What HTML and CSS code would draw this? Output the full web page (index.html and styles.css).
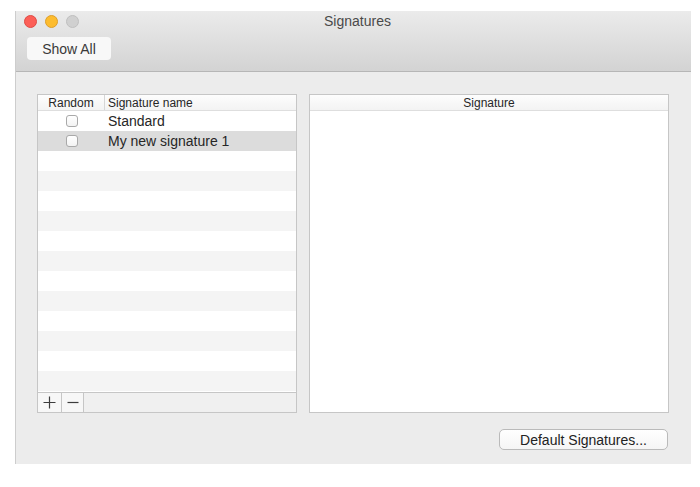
FILE: index.html
```html
<!DOCTYPE html>
<html lang="en">
<head>
  <meta charset="UTF-8">
  <title>Signatures</title>
  <link rel="stylesheet" href="styles.css">
</head>
<body>
  <div class="window">
    <div class="titlebar">
      <div class="title-row">
        <div class="lights">
          <span class="light red"></span>
          <span class="light yellow"></span>
          <span class="light off"></span>
        </div>
        <div class="title">Signatures</div>
        <div></div>
      </div>
      <button class="show-all">Show All</button>
    </div>

    <div class="content">
      <div class="panels">
        <div class="list">
          <div class="list-head">
            <div class="col-random">Random</div>
            <div class="col-name">Signature name</div>
          </div>
          <div class="list-body">
            <div class="row"><div class="cell-check"><span class="check"></span></div><div class="cell-name">Standard</div></div>
            <div class="row selected"><div class="cell-check"><span class="check"></span></div><div class="cell-name">My new signature 1</div></div>
            <div class="row"></div>
            <div class="row"></div>
            <div class="row"></div>
            <div class="row"></div>
            <div class="row"></div>
            <div class="row"></div>
            <div class="row"></div>
            <div class="row"></div>
            <div class="row"></div>
            <div class="row"></div>
            <div class="row"></div>
            <div class="row"></div>
            <div class="row"></div>
          </div>
          <div class="list-foot">
            <button class="tool plus" title="Add">
              <svg width="13" height="13" viewBox="0 0 13 13"><path d="M6.5 0.5v12M0.5 6.5h12" stroke="#3c3c3c" stroke-width="1.2" fill="none"/></svg>
            </button>
            <button class="tool minus" title="Remove">
              <svg width="12" height="13" viewBox="0 0 12 13"><path d="M0.5 6.5h11" stroke="#3c3c3c" stroke-width="1.2" fill="none"/></svg>
            </button>
          </div>
        </div>

        <div class="editor">
          <div class="editor-head">Signature</div>
          <div class="editor-body"></div>
        </div>
      </div>

      <div class="actions">
        <button class="default-btn">Default Signatures...</button>
      </div>
    </div>
  </div>
</body>
</html>
```

FILE: styles.css
```css
body {
  margin: 0;
  background-color: #fff;
  font-family: "Liberation Sans", Arial, sans-serif;
  color: #262626;
}
button {
  font-family: inherit;
  color: inherit;
  cursor: pointer;
}
.window {
  margin: 11px 0 0 15px;
  width: 676px;
  height: 453px;
  box-sizing: border-box;
  border-left: 1px solid #cdcdcd;
  background-color: #ececec;
  display: flex;
  flex-direction: column;
}
.titlebar {
  height: 61px;
  box-sizing: border-box;
  padding: 4px 0 0 8px;
  border-bottom: 1px solid #b6b6b6;
  background: linear-gradient(#ebebeb, #d3d3d3);
}
.title-row {
  display: grid;
  grid-template-columns: 1fr auto 1fr;
  align-items: center;
  height: 13px;
  margin-left: -8px;
  padding-left: 8px;
}
.lights {
  display: flex;
  gap: 8px;
}
.light {
  width: 13px;
  height: 13px;
  border-radius: 50%;
  box-sizing: border-box;
}
.light.red {
  background-color: #fc5f57;
  border: 1px solid #df4a44;
}
.light.yellow {
  background-color: #fdbc2e;
  border: 1px solid #de9f29;
}
.light.off {
  background-color: #d0d0d0;
  border: 1px solid #bfbfbf;
}
.title {
  font-size: 14px;
  line-height: 13px;
  color: #4a4a4a;
}
.show-all {
  margin: 9px 0 0 3px;
  width: 84px;
  height: 23px;
  border: none;
  border-radius: 4px;
  background-color: #f8f8f8;
  font-size: 14px;
  color: #3a3a3a;
  padding: 0;
}
.content {
  flex: 1;
  padding: 22px 22px 0 21px;
}
.panels {
  display: flex;
  gap: 12px;
  height: 319px;
}
.list {
  width: 260px;
  box-sizing: border-box;
  border: 1px solid #c6c6c6;
  display: flex;
  flex-direction: column;
  background-color: #fff;
}
.list-head {
  display: flex;
  height: 15px;
  flex-shrink: 0;
  border-bottom: 1px solid #dedede;
  font-size: 12px;
  line-height: 16px;
  background: linear-gradient(#fdfdfd, #f3f3f3);
}
.col-random {
  width: 66px;
  text-align: center;
  border-right: 1px solid #d6d6d6;
}
.col-name {
  padding-left: 3px;
}
.list-body {
  flex: 1;
  overflow: hidden;
}
.row {
  display: flex;
  align-items: center;
  height: 20px;
  font-size: 14px;
}
.row:nth-child(even) {
  background-color: #f4f4f4;
}
.row.selected {
  background-color: #dcdcdc;
}
.cell-check {
  width: 67px;
  display: flex;
  justify-content: center;
}
.check {
  width: 12px;
  height: 12px;
  box-sizing: border-box;
  border: 1px solid #a9a9a9;
  border-radius: 3px;
  background: linear-gradient(#fff, #f3f3f3);
}
.cell-name {
  padding-left: 3px;
}
.list-foot {
  display: flex;
  height: 19px;
  flex-shrink: 0;
  border-top: 1px solid #c6c6c6;
  background-color: #f0f0f0;
}
.tool {
  height: 19px;
  padding: 0;
  border: none;
  border-right: 1px solid #c6c6c6;
  background-color: #f7f7f7;
  display: flex;
  align-items: center;
  justify-content: center;
}
.tool.plus {
  width: 24px;
}
.tool.minus {
  width: 22px;
}
.editor {
  width: 360px;
  box-sizing: border-box;
  border: 1px solid #c6c6c6;
  display: flex;
  flex-direction: column;
  background-color: #fff;
}
.editor-head {
  height: 15px;
  border-bottom: 1px solid #dedede;
  font-size: 12px;
  line-height: 16px;
  text-align: center;
  background: linear-gradient(#fdfdfd, #f3f3f3);
}
.editor-body {
  flex: 1;
}
.actions {
  display: flex;
  justify-content: flex-end;
  margin-top: 16px;
  padding-right: 1px;
}
.default-btn {
  width: 169px;
  height: 21px;
  padding: 0;
  border: 1px solid #bababa;
  border-radius: 5px;
  background: linear-gradient(#ffffff, #f5f5f5);
  font-size: 14px;
  color: #222;
}
```
